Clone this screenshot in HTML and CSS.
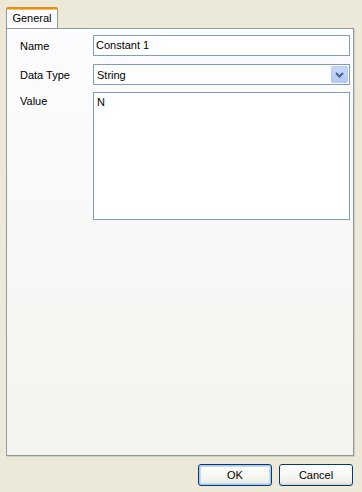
FILE: index.html
```html
<!DOCTYPE html>
<html>
<head>
<meta charset="utf-8">
<link rel="stylesheet" href="styles.css">
</head>
<body>
<div class="dialog">
  <div class="tabs">
    <div class="tab">General</div>
  </div>
  <div class="panel">
    <div class="row">
      <div class="label">Name</div>
      <div class="field input">Constant 1</div>
    </div>
    <div class="row row-combo">
      <div class="label">Data Type</div>
      <div class="field combo">
        <span class="combo-text">String</span>
        <span class="combo-btn">
          <svg width="9" height="6" viewBox="0 0 9 6"><path d="M1 1 L4.5 4.5 L8 1" fill="none" stroke="#4d6185" stroke-width="2"/></svg>
        </span>
      </div>
    </div>
    <div class="row row-value">
      <div class="label">Value</div>
      <div class="field textarea">N</div>
    </div>
  </div>
  <div class="buttons">
    <div class="btn btn-default">OK</div>
    <div class="btn">Cancel</div>
  </div>
</div>
</body>
</html>
```
FILE: styles.css
```css
html, body {
  margin: 0;
  padding: 0;
  background: #ece9d8;
  font-family: "Liberation Sans", Arial, sans-serif;
  font-size: 11px;
  color: #000;
}
.dialog {
  width: 362px;
  height: 492px;
  display: flex;
  flex-direction: column;
}
.tabs {
  display: flex;
  padding: 7px 0 0 6px;
  height: 21px;
  position: relative;
  z-index: 1;
}
.tab {
  width: 50px;
  height: 19px;
  border: 1px solid #919b9c;
  border-top: 2px solid #e68b2c;
  border-bottom: none;
  border-radius: 2px 2px 0 0;
  box-shadow: inset 0 1px 0 #ffc83c;
  background: #fcfcfe;
  text-align: center;
  line-height: 19px;
  margin-bottom: -1px;
}
.panel {
  margin: 0 8px 0 6px;
  height: 420px;
  border: 1px solid #919b9c;
  background: linear-gradient(#fcfcfe, #f4f3ee);
  padding: 6px 3px 0 13px;
  display: flex;
  flex-direction: column;
  gap: 8px;
  box-shadow: 1px 1px 0 #d0cdbf;
}
.row {
  display: flex;
  align-items: center;
}
.row-value {
  align-items: flex-start;
  margin-top: -1px;
}
.label {
  width: 73px;
  flex: none;
}
.row-value .label {
  padding-top: 3px;
}
.field {
  width: 255px;
  border: 1px solid #7f9db9;
  background: #fff;
  box-sizing: content-box;
}
.input {
  height: 19px;
  line-height: 19px;
  padding-left: 2px;
  width: 253px;
}
.combo {
  height: 19px;
  display: flex;
  align-items: center;
  justify-content: space-between;
}
.combo-text {
  padding-left: 3px;
}
.combo-btn {
  width: 15px;
  height: 15px;
  margin-right: 1px;
  background: linear-gradient(#c7d6fd, #b4c8f6);
  border: 1px solid #b5c8f4;
  border-radius: 2px;
  display: flex;
  align-items: center;
  justify-content: center;
}
.textarea {
  padding: 3px 0 0 3px;
  width: 252px;
  height: 123px;
}
.buttons {
  display: flex;
  justify-content: flex-end;
  gap: 7px;
  padding: 8px 9px 0 0;
}
.btn {
  width: 72px;
  height: 20px;
  border: 1px solid #003c74;
  border-radius: 3px;
  background: linear-gradient(#ffffff, #f0f0ea 85%, #d6d0c5);
  text-align: center;
  line-height: 20px;
}
.btn-default {
  box-shadow: inset 0 0 0 1px #aac8f0, inset 0 0 0 2px #c6dbf7;
}
```
